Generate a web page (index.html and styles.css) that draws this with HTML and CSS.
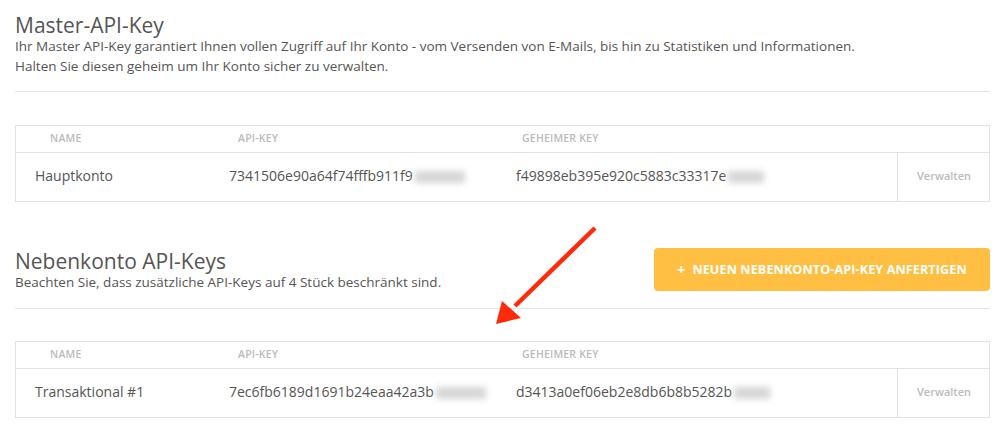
FILE: index.html
```html
<!DOCTYPE html>
<html lang="de">
<head>
<meta charset="utf-8">
<title>API-Keys</title>
<link rel="stylesheet" href="styles.css">
</head>
<body>
<div class="page">
  <section class="section first">
    <h2 class="title">Master-API-Key</h2>
    <p class="desc">Ihr Master API-Key garantiert Ihnen vollen Zugriff auf Ihr Konto - vom Versenden von E-Mails, bis hin zu Statistiken und Informationen.<br>Halten Sie diesen geheim um Ihr Konto sicher zu verwalten.</p>
  </section>
  <hr class="rule">
  <div class="keytable">
    <div class="head">
      <div class="h h-name">NAME</div>
      <div class="h h-api">API-KEY</div>
      <div class="h h-secret">GEHEIMER KEY</div>
      <div class="h"></div>
    </div>
    <div class="row">
      <div class="c c-name">Hauptkonto</div>
      <div class="c c-api">7341506e90a64f74fffb911f9<span class="blur w1"></span></div>
      <div class="c c-secret">f49898eb395e920c5883c33317e<span class="blur w2"></span></div>
      <div class="c c-action">Verwalten</div>
    </div>
  </div>

  <div class="section second">
    <div class="sec-text">
      <h2 class="title">Nebenkonto API-Keys</h2>
      <p class="desc">Beachten Sie, dass zusätzliche API-Keys auf 4 Stück beschränkt sind.</p>
    </div>
    <button class="btn"><span class="plus">+</span>NEUEN NEBENKONTO-API-KEY ANFERTIGEN</button>
  </div>
  <hr class="rule">
  <div class="keytable second-table">
    <div class="head">
      <div class="h h-name">NAME</div>
      <div class="h h-api">API-KEY</div>
      <div class="h h-secret">GEHEIMER KEY</div>
      <div class="h"></div>
    </div>
    <div class="row">
      <div class="c c-name">Transaktional #1</div>
      <div class="c c-api">7ec6fb6189d1691b24eaa42a3b<span class="blur w1"></span></div>
      <div class="c c-secret">d3413a0ef06eb2e8db6b8b5282b<span class="blur w2"></span></div>
      <div class="c c-action">Verwalten</div>
    </div>
  </div>
</div>
<svg class="arrow" width="120" height="110" viewBox="0 0 120 110">
  <line x1="99" y1="7" x2="19" y2="85" stroke="#ff2a0a" stroke-width="4.5"/>
  <polygon points="0,103 6,80 25,97" fill="#ff2a0a"/>
</svg>
</body>
</html>
```

FILE: styles.css
```css
* { box-sizing: border-box; }
html, body { margin: 0; padding: 0; background: #fff; }
body {
  font-family: "Open Sans", "Noto Sans", sans-serif;
  color: #555;
  position: relative;
  width: 1007px;
  height: 434px;
  overflow: hidden;
}
.page {
  padding: 12px 17px 0 15px;
}
.title {
  margin: 0;
  font-weight: 400;
  font-size: 21px;
  line-height: 26px;
  color: #555;
}
.desc {
  margin: -2px 0 0 0;
  font-size: 13.5px;
  line-height: 20px;
  color: #555;
}
.rule {
  margin: 0;
  border: 0;
  border-top: 1px solid #e2e2e2;
  height: 0;
}
.first { padding-bottom: 15px; }
.keytable {
  margin-top: 33px;
  border: 1px solid #e2e2e2;
  display: flex;
  flex-direction: column;
}
.second-table { margin-top: 32px; }
.head, .row {
  display: grid;
  grid-template-columns: 213px 287px 381px 93px;
}
.head {
  height: 27px;
  border-bottom: 1px solid #e2e2e2;
  align-items: center;
  padding-bottom: 2px;
}
.h {
  font-size: 10.5px;
  font-weight: 600;
  color: #bbb;
  letter-spacing: 0.2px;
}
.h-name { padding-left: 34px; }
.h-api { padding-left: 9px; }
.h-secret { padding-left: 6px; }
.row { height: 48px; align-items: center; }
.c { font-size: 14px; color: #555; white-space: nowrap; padding-bottom: 3px; }
.c-name { padding-left: 19px; }
.c-action {
  height: 100%;
  border-left: 1px solid #e2e2e2;
  display: flex;
  align-items: center;
  justify-content: center;
  font-size: 11px;
  color: #bbb;
  font-weight: 600;
}
.blur {
  display: inline-block;
  vertical-align: middle;
  height: 12px;
  background: #d6d6d6;
  filter: blur(3px);
  margin-left: 2px;
}
.w1 { width: 50px; }
.w2 { width: 36px; }
.second {
  margin-top: 46px;
  display: flex;
  justify-content: space-between;
  align-items: flex-start;
  padding-bottom: 16px;
}
.btn {
  margin-top: 0;
  width: 336px;
  height: 43px;
  background: #ffbf43;
  border: 0;
  border-radius: 4px;
  color: #fff;
  font-family: "Open Sans", "Noto Sans", sans-serif;
  font-weight: 700;
  font-size: 12.6px;
  letter-spacing: 0.1px;
  display: flex;
  align-items: center;
  justify-content: center;
  padding: 0;
}
.plus { margin-right: 7px; font-size: 14px; }
.arrow {
  position: absolute;
  left: 496px;
  top: 221px;
}
```
